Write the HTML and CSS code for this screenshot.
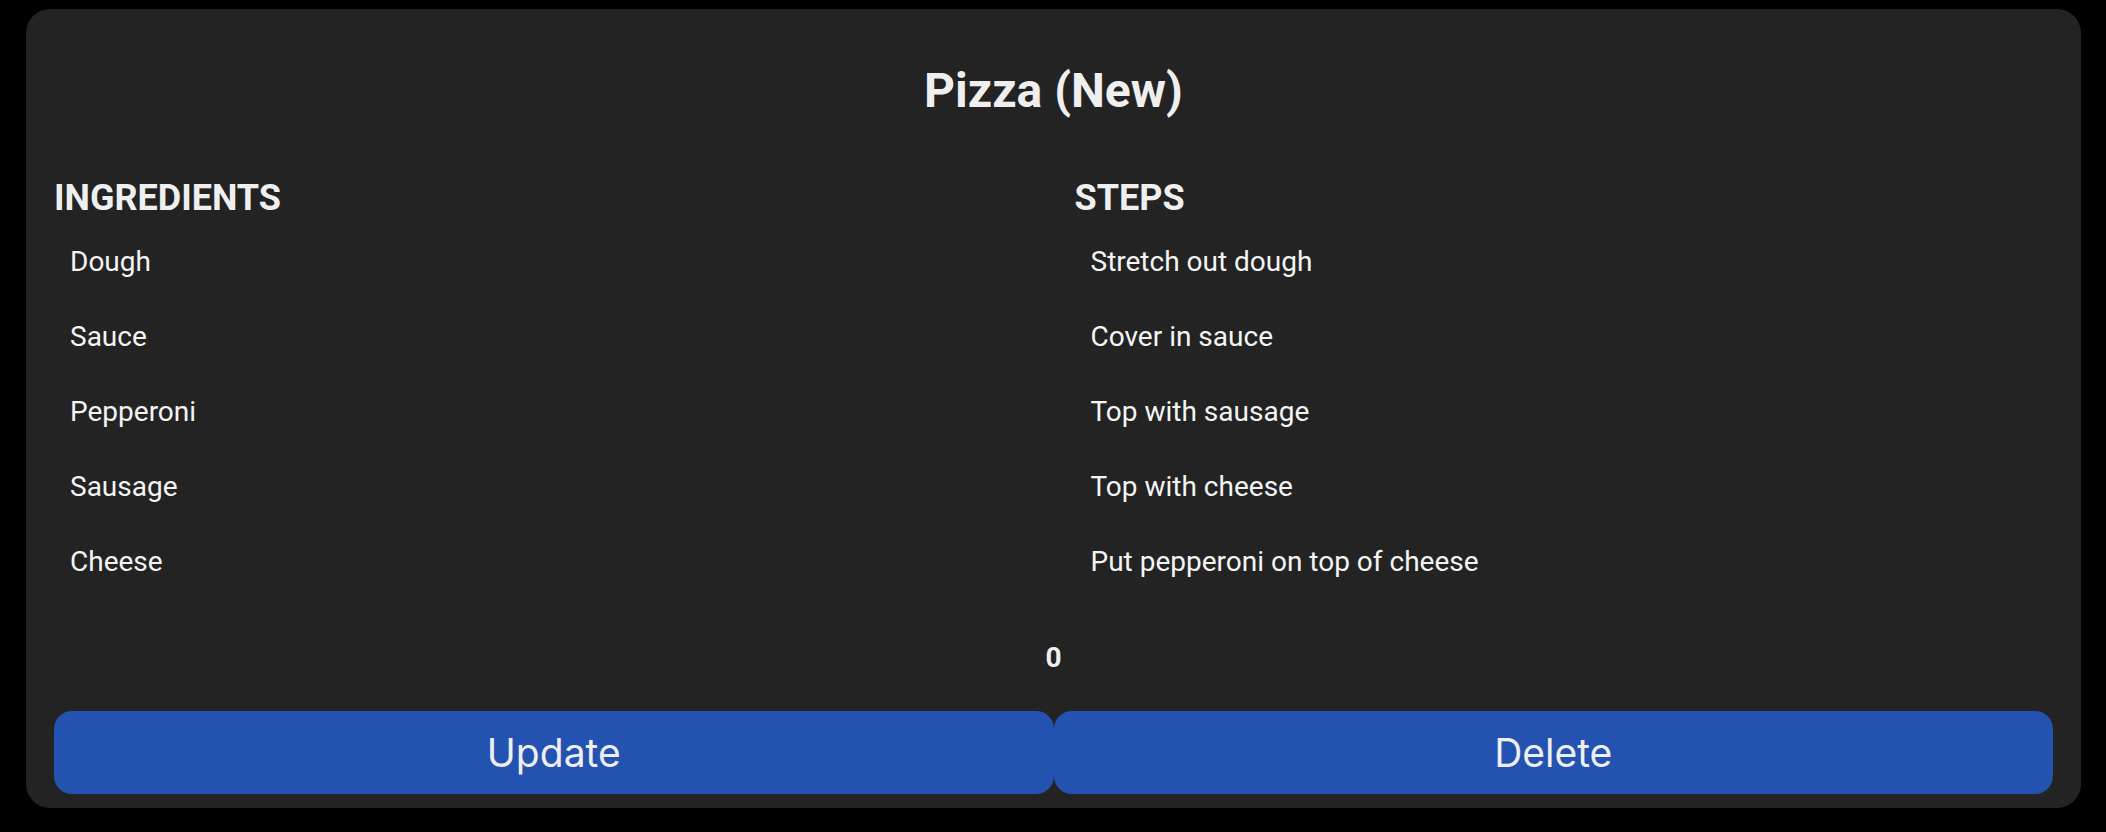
FILE: index.html
```html
<!DOCTYPE html>
<html lang="en">
<head>
<meta charset="utf-8">
<title>Pizza (New)</title>
<link rel="stylesheet" href="styles.css">
</head>
<body>
<div class="page">
  <div class="card">
    <h1 class="title">Pizza (New)</h1>
    <div class="columns">
      <section class="col">
        <h2 class="heading">INGREDIENTS</h2>
        <ul class="list">
          <li>Dough</li>
          <li>Sauce</li>
          <li>Pepperoni</li>
          <li>Sausage</li>
          <li>Cheese</li>
        </ul>
      </section>
      <section class="col">
        <h2 class="heading">STEPS</h2>
        <ul class="list">
          <li>Stretch out dough</li>
          <li>Cover in sauce</li>
          <li>Top with sausage</li>
          <li>Top with cheese</li>
          <li>Put pepperoni on top of cheese</li>
        </ul>
      </section>
    </div>
    <div class="count">0</div>
    <div class="actions">
      <button class="btn">Update</button>
      <button class="btn">Delete</button>
    </div>
  </div>
</div>
</body>
</html>
```
FILE: styles.css
```css
html, body {
  margin: 0;
  padding: 0;
  background: #000;
}
body {
  font-family: Roboto, "Noto Sans", sans-serif;
  color: #eeeeee;
}
.page {
  padding: 9px 25px 24px 26px;
}
.card {
  background: #232323;
  border-radius: 24px;
  padding: 54px 28px 14px;
}
.title {
  margin: 0;
  font-size: 48px;
  line-height: 56px;
  font-weight: 700;
  text-align: center;
  color: #efefef;
}
.columns {
  display: grid;
  grid-template-columns: 1fr 1fr;
  column-gap: 42px;
}
.heading {
  margin: 58px 0 0;
  font-size: 36px;
  line-height: 42px;
  font-weight: 700;
  color: #efefef;
}
.list {
  list-style: none;
  margin: 5px 0 0;
  padding: 0;
}
.list li {
  font-size: 28px;
  line-height: 33px;
  padding: 21px 16px;
  color: #f4f4f4;
}
.count {
  margin-top: 42px;
  font-size: 28px;
  line-height: 33px;
  font-weight: 700;
  text-align: center;
  color: #efefef;
}
.actions {
  display: flex;
  margin-top: 37px;
}
.btn {
  flex: 1;
  height: 83px;
  border: none;
  border-radius: 18px;
  background: #2352b1;
  color: #eeeeee;
  font-family: Inter, "Liberation Sans", sans-serif;
  font-size: 39px;
  display: flex;
  align-items: center;
  justify-content: center;
  padding: 0;
}
```
